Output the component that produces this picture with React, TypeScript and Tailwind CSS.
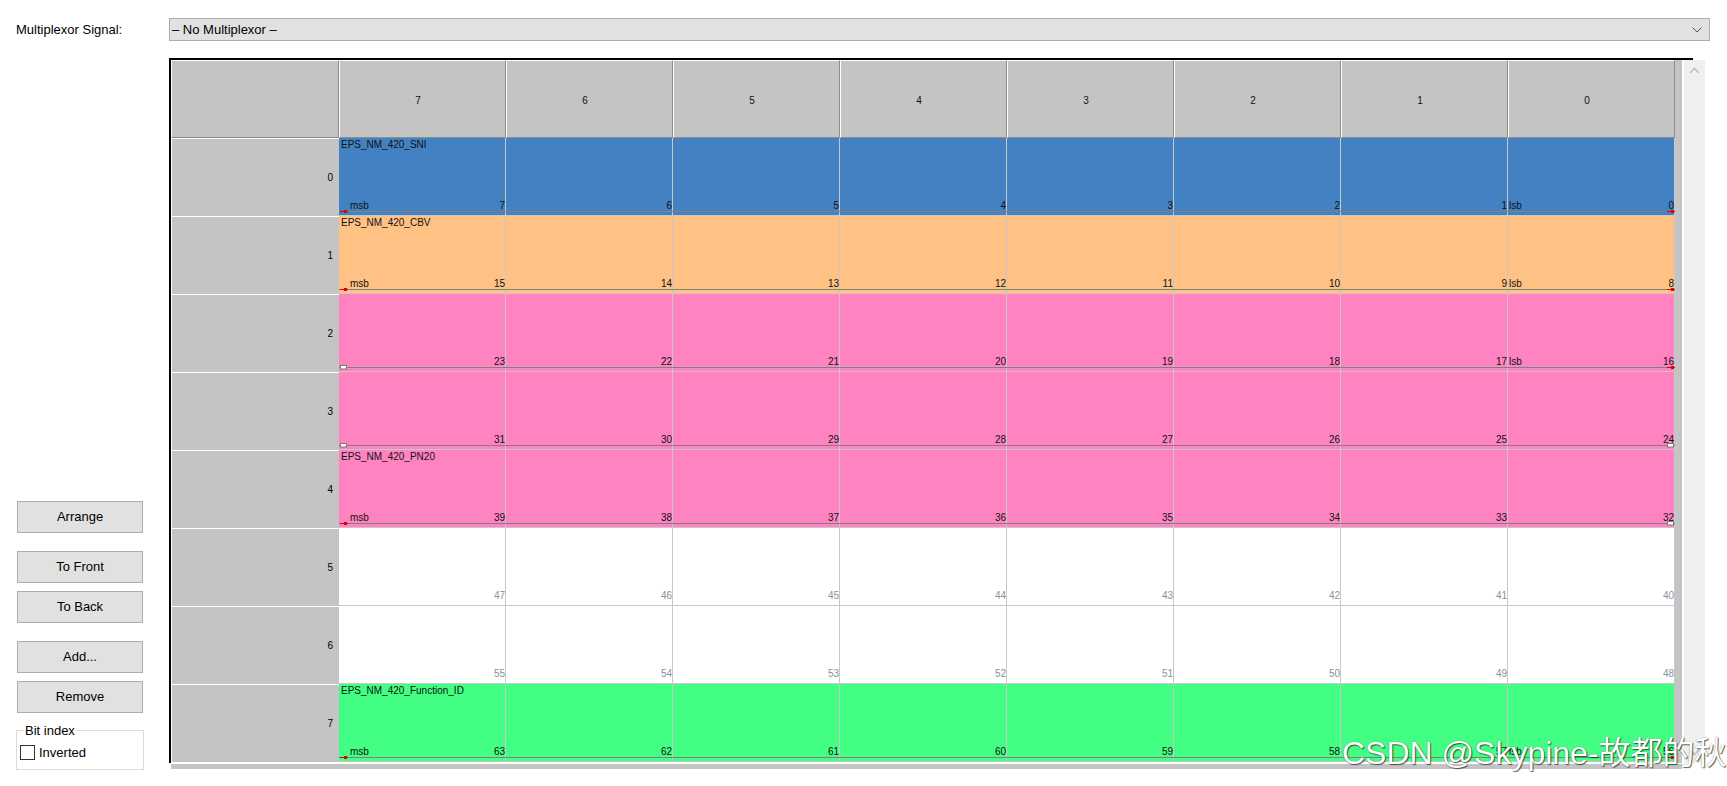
import React from 'react'

const COLS = [7, 6, 5, 4, 3, 2, 1, 0]

type Marker = 'red' | 'white' | null

interface SignalRow {
  bg: string
  name?: string
  msb?: boolean
  lsb?: boolean
  left: Marker
  right: Marker
  line: boolean
}

const ROWS: SignalRow[] = [
  { bg: 'bg-[#4282c3]', name: 'EPS_NM_420_SNI', msb: true, lsb: true, left: 'red', right: 'red', line: true },
  { bg: 'bg-[#ffc284]', name: 'EPS_NM_420_CBV', msb: true, lsb: true, left: 'red', right: 'red', line: true },
  { bg: 'bg-[#ff83c1]', lsb: true, left: 'white', right: 'red', line: true },
  { bg: 'bg-[#ff83c1]', left: 'white', right: 'white', line: true },
  { bg: 'bg-[#ff83c1]', name: 'EPS_NM_420_PN20', msb: true, left: 'red', right: 'white', line: true },
  { bg: 'bg-white', left: null, right: null, line: false },
  { bg: 'bg-white', left: null, right: null, line: false },
  { bg: 'bg-[#42ff83]', name: 'EPS_NM_420_Function_ID', msb: true, lsb: true, left: 'red', right: 'red', line: true },
]

function MarkerIcon({ kind }: { kind: Marker }) {
  if (kind === 'red') {
    return (
      <svg width="8" height="5" viewBox="0 0 8 5">
        <line x1="0" y1="2.5" x2="8" y2="2.5" stroke="#e00000" strokeWidth="1" />
        <rect x="4" y="1" width="3" height="3" fill="#e00000" />
      </svg>
    )
  }
  return (
    <svg width="8" height="5" viewBox="0 0 8 5">
      <rect x="0.5" y="0.5" width="6" height="3.5" fill="#ffffff" stroke="#7a7a7a" strokeWidth="1" />
    </svg>
  )
}

function Button({ label }: { label: string }) {
  return (
    <div className="w-[126px] h-[32px] bg-[#e1e1e1] border border-[#adadad] flex items-center justify-center text-[13px] text-black">
      {label}
    </div>
  )
}

function DataRow({ row, r }: { row: SignalRow; r: number }) {
  const white = row.bg === 'bg-white'
  return (
    <div className="flex h-[78px]">
      <div className="w-[168px] shrink-0 bg-[#c4c4c4] border-t border-l border-white flex items-center justify-end pr-[6px] text-[10px] text-black">
        {r}
      </div>
      <div className="relative flex">
        {COLS.map((c) => (
          <div
            key={c}
            className={`w-[167px] h-full border-r border-b border-[#c8c8c8] flex items-end justify-between pb-[4px] text-[10px] leading-[10px] ${row.bg}`}
          >
            <span className={c === 7 ? 'pl-[11px] text-[#111]' : 'pl-[1px] text-[#111]'}>
              {c === 7 && row.msb ? 'msb' : ''}
              {c === 0 && row.lsb ? 'lsb' : ''}
            </span>
            <span className={white ? 'text-[#8592a0]' : 'text-[#111]'}>{r * 8 + c}</span>
          </div>
        ))}

        {/* signal overlay */}
        {row.name && (
          <div className="absolute left-[2px] top-[2px] text-[10px] leading-[10px] text-[#111] whitespace-nowrap">
            {row.name}
          </div>
        )}
        {row.line && <div className="absolute left-0 right-0 top-[73px] h-px bg-[#808080]" />}
        {row.left && (
          <div className="absolute left-[1px] top-[71px] flex">
            <MarkerIcon kind={row.left} />
          </div>
        )}
        {row.right && (
          <div className="absolute right-0 top-[71px] flex">
            <MarkerIcon kind={row.right} />
          </div>
        )}
      </div>
    </div>
  )
}

export default function App() {
  return (
    <div className="relative w-[1727px] h-[786px] bg-white overflow-hidden font-[Liberation_Sans,Arial,sans-serif] text-black">
      {/* multiplexor selector */}
      <div className="flex items-center pt-[18px]">
        <div className="w-[169px] pl-[16px] text-[13px]">Multiplexor Signal:</div>
        <div className="w-[1541px] h-[23px] bg-[#e1e1e1] border border-[#adadad] flex items-center justify-between pl-[2px] pr-[7px] text-[13px]">
          <span>– No Multiplexor –</span>
          <svg width="10" height="6" viewBox="0 0 10 6">
            <polyline points="0.5,0.5 5,5 9.5,0.5" fill="none" stroke="#555" strokeWidth="1" />
          </svg>
        </div>
      </div>

      <div className="flex mt-[17px]">
        {/* left controls */}
        <div className="w-[169px] shrink-0 pl-[17px] pt-[443px] flex flex-col">
          <Button label="Arrange" />
          <div className="mt-[18px]">
            <Button label="To Front" />
          </div>
          <div className="mt-[8px]">
            <Button label="To Back" />
          </div>
          <div className="mt-[18px]">
            <Button label="Add..." />
          </div>
          <div className="mt-[8px]">
            <Button label="Remove" />
          </div>
          <fieldset className="ml-[-1px] mt-[11px] w-[128px] h-[46px] border border-[#dcdcdc] pl-[3px]">
            <legend className="ml-[4px] px-[1px] text-[13px] leading-[13px]">Bit index</legend>
            <div className="flex items-center gap-[4px] mt-[6px] text-[13px]">
              <div className="w-[15px] h-[15px] border border-[#333] bg-white" />
              <span>Inverted</span>
            </div>
          </fieldset>
        </div>

        {/* bit matrix */}
        <div className="flex flex-col">
          <div className="w-[1524px] h-[2px] bg-black" />
          <div className="flex">
            <div className="border-l-2 border-black flex flex-col">
              <div className="flex h-[78px]">
                <div className="w-[168px] bg-[#c4c4c4] border border-t-white border-l-white border-r-[#8c8c8c] border-b-[#8c8c8c]" />
                {COLS.map((c) => (
                  <div
                    key={c}
                    className="w-[167px] bg-[#c4c4c4] border border-t-white border-l-white border-r-[#8c8c8c] border-b-[#8c8c8c] flex items-center justify-center pr-[9px] pt-[2px] text-[10px] text-[#111]"
                  >
                    {c}
                  </div>
                ))}
              </div>
              {ROWS.map((row, r) => (
                <DataRow key={r} row={row} r={r} />
              ))}
            </div>
            <div className="w-[7px] h-[703px] bg-[#c4c4c4]" />
            <div className="w-[21px] h-[703px] ml-[2px] bg-[#f0f0f0] flex flex-col items-center justify-between py-[7px]">
              <svg width="11" height="7" viewBox="0 0 11 7">
                <polyline points="1,6 5.5,1.5 10,6" fill="none" stroke="#c0c0c0" strokeWidth="1.6" />
              </svg>
              <svg width="11" height="7" viewBox="0 0 11 7">
                <polyline points="1,1 5.5,5.5 10,1" fill="none" stroke="#c0c0c0" strokeWidth="1.6" />
              </svg>
            </div>
          </div>
          <div className="ml-[2px] mt-[1px] w-[1511px] h-[5px] bg-[#c4c4c4]" />
        </div>
      </div>

      {/* watermark */}
      <div className="absolute left-[1342px] top-[737px] text-[32px] leading-none text-white whitespace-nowrap font-[Liberation_Sans,Noto_Sans_CJK_SC,sans-serif] [text-shadow:1px_1px_1px_rgba(0,0,0,0.6),0_0_1px_rgba(0,0,0,0.5)]">
        CSDN @Skypine-故都的秋
      </div>
    </div>
  )
}
